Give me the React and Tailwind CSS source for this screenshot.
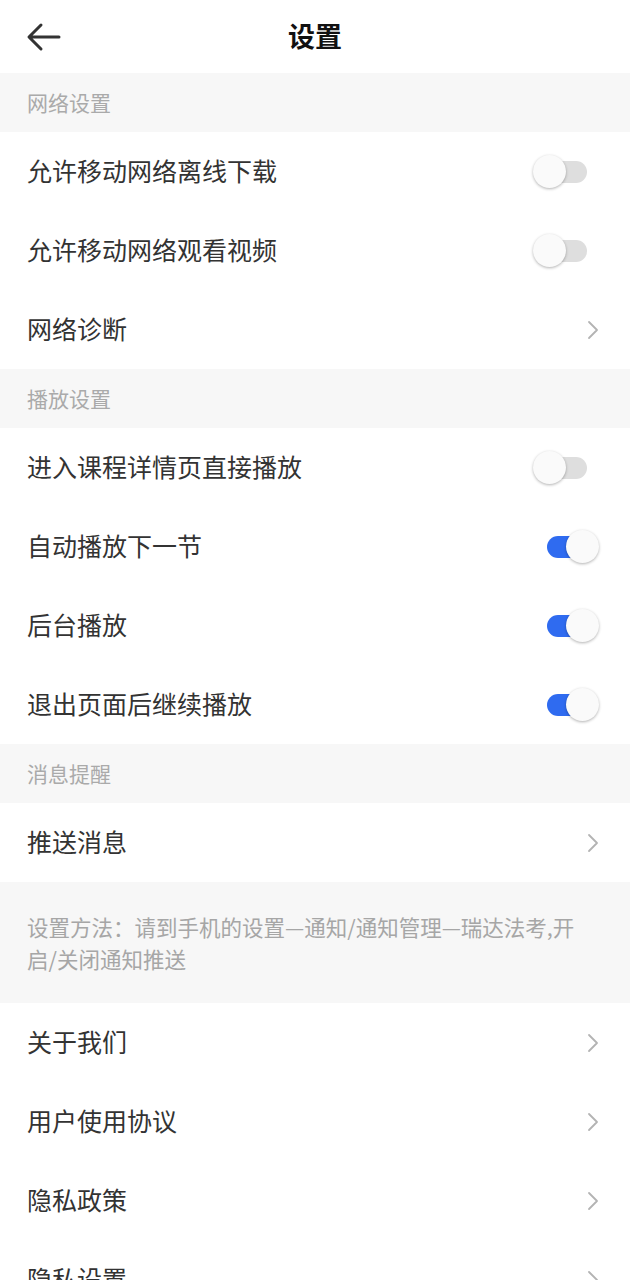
const font = "font-['Noto_Sans_CJK_SC','Noto_Sans',sans-serif]";

const Toggle = ({ on }) => (
  <div className="relative w-[67px] h-[34px]">
    <div
      className={
        "absolute left-[14px] w-[40px] top-[6px] h-[22px] rounded-full " +
        (on ? "bg-[#2f6bf0]" : "bg-[#dedede]")
      }
    />
    <div
      className={
        "absolute top-0 w-[33px] h-[33px] rounded-full bg-[#fafafa] shadow-[0_1px_3px_rgba(0,0,0,0.3)] " +
        (on ? "left-[33px]" : "left-0")
      }
    />
  </div>
);

const Chevron = () => (
  <svg width="14" height="22" viewBox="0 0 14 22" className="mr-[30px]">
    <polyline points="3,3 11,11 3,19" fill="none" stroke="#b3b3b3" strokeWidth="1.8" strokeLinecap="round" strokeLinejoin="round" />
  </svg>
);

const Section = ({ title }) => (
  <div className="h-[59px] bg-[#f7f7f7] flex items-center px-[27px] text-[21px] text-[#aaaaaa]">{title}</div>
);

const Row = ({ label, toggle, on }) => (
  <div className="h-[79px] bg-white flex items-center justify-between pl-[27px]">
    <span className="text-[25px] leading-[34px] mb-[4px] text-[#333333]">{label}</span>
    {toggle ? (
      <div className="mr-[30px]">
        <Toggle on={on} />
      </div>
    ) : (
      <Chevron />
    )}
  </div>
);

export default function App() {
  return (
    <div className={"w-[630px] h-[1280px] overflow-hidden bg-white " + font}>
      <header className="relative h-[73px] flex items-center justify-center">
        <svg width="36" height="30" viewBox="0 0 36 30" className="absolute left-[26px] top-[22px]">
          <path d="M33 15H4M15 3L3 15l12 12" fill="none" stroke="#333" strokeWidth="3" strokeLinecap="round" strokeLinejoin="round" />
        </svg>
        <h1 className="text-[27px] font-bold text-[#111]">设置</h1>
      </header>

      <Section title="网络设置" />
      <Row label="允许移动网络离线下载" toggle on={false} />
      <Row label="允许移动网络观看视频" toggle on={false} />
      <Row label="网络诊断" />

      <Section title="播放设置" />
      <Row label="进入课程详情页直接播放" toggle on={false} />
      <Row label="自动播放下一节" toggle on />
      <Row label="后台播放" toggle on />
      <Row label="退出页面后继续播放" toggle on />

      <Section title="消息提醒" />
      <Row label="推送消息" />
      <div className="bg-[#f7f7f7] pl-[27px] pr-[40px] pt-[29px] pb-[28px] text-[21.5px] leading-[32px] text-[#a6a6a6]">
        设置方法：请到手机的设置—通知/通知管理—瑞达法考,开启/关闭通知推送
      </div>

      <Row label="关于我们" />
      <Row label="用户使用协议" />
      <Row label="隐私政策" />
      <Row label="隐私设置" />
    </div>
  );
}
